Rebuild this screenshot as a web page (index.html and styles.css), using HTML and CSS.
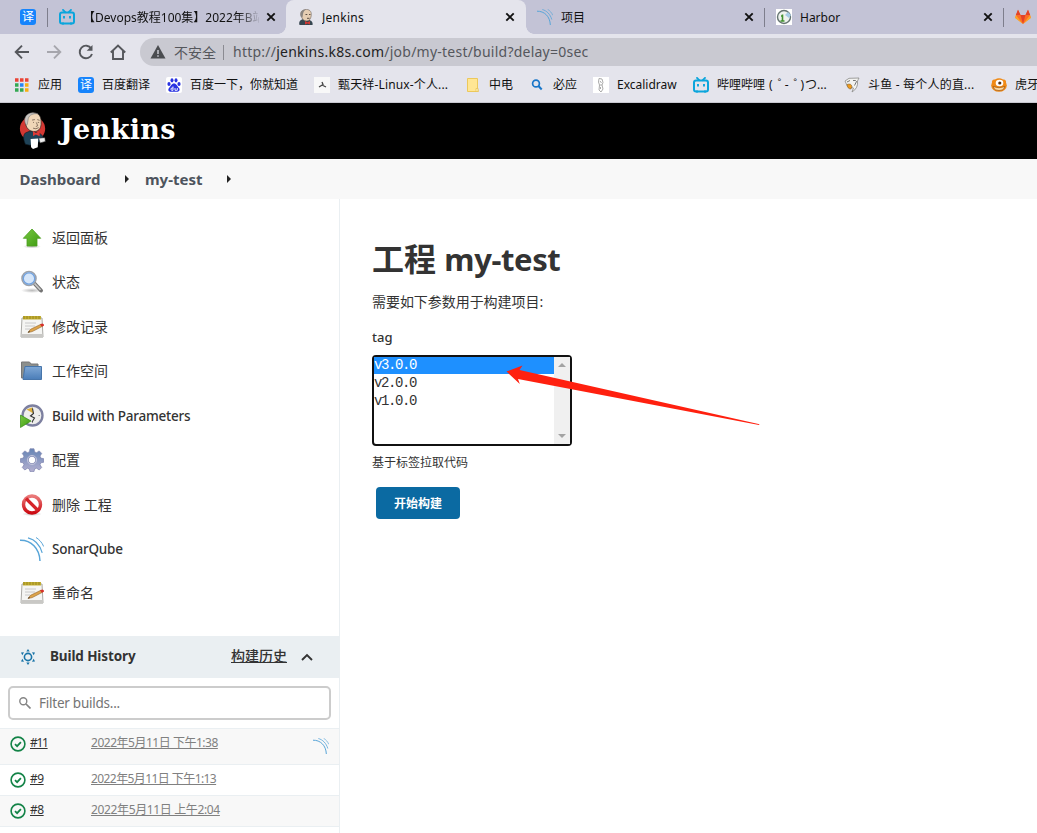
FILE: index.html
```html
<!DOCTYPE html>
<html lang="zh-CN">
<head>
<meta charset="utf-8">
<title>Jenkins</title>
<link rel="stylesheet" href="styles.css">
</head>
<body>
<svg class="sprite" width="0" height="0" aria-hidden="true">
  <defs>
    <linearGradient id="green" x1="0" y1="0" x2="1" y2="1"><stop offset="0" stop-color="#79c943"/><stop offset="1" stop-color="#3d9a10"/></linearGradient>
    <linearGradient id="blue" x1="0" y1="0" x2="0" y2="1"><stop offset="0" stop-color="#7fa8d6"/><stop offset="1" stop-color="#4a7db8"/></linearGradient>
    <linearGradient id="gear" x1="0" y1="0" x2="0" y2="1"><stop offset="0" stop-color="#6685b5"/><stop offset="1" stop-color="#b3afd0"/></linearGradient>
    <linearGradient id="red" x1="0" y1="0" x2="0" y2="1"><stop offset="0" stop-color="#ea7a7a"/><stop offset="1" stop-color="#cc0a12"/></linearGradient>
    <radialGradient id="shade"><stop offset="0" stop-color="#777" stop-opacity=".5"/><stop offset="1" stop-color="#777" stop-opacity="0"/></radialGradient>
  </defs>
  <symbol id="close" viewBox="0 0 10 10"><path d="M1.3 1.3l7.4 7.4M8.7 1.3L1.3 8.7" stroke="#111" stroke-width="1.9"/></symbol>
  <symbol id="bili" viewBox="0 0 16 16"><path d="M4 .9l2.2 2.3M12 .9L9.800 3.200" stroke="#0ba5dc" stroke-width="1.8" stroke-linecap="round"/><rect x="1" y="3.600" width="14" height="10.800" rx="2" fill="none" stroke="#0ba5dc" stroke-width="2"/><path d="M5 7v2.600M11 7v2.600" stroke="#0ba5dc" stroke-width="1.900"/><path d="M3 14.500h2M11 14.500h2" stroke="#0ba5dc" stroke-width="2"/></symbol>
  <symbol id="sonar" viewBox="0 0 24 24"><g fill="none" stroke="#58a5d8"><path d="M0 3.300C11 3 19.500 11 20 24" stroke-width="1.500"/><path d="M8 .8c6.500 1.600 12 7.200 14.200 15" stroke-width="1.200"/><path d="M16 .5c3.300 2 6 5 7.700 9" stroke-width="1"/></g></symbol>
  <symbol id="butler" viewBox="0 0 28 40">
    <ellipse cx="13.500" cy="17.500" rx="13.300" ry="13" fill="#d33833"/>
    <path d="M6 34c-2-5-3-9 0-12l5-2 9 2c4 2 5 4 5 7l-6 3-8 3z" fill="#1f4358" stroke="#0d1a22" stroke-width=".6"/>
    <path d="M6 10C6 3 10 .7 15 .7c6 .5 8 5 7.500 12.300-.4 5-3 7.500-7.500 7.500S6 17 6 10z" fill="#f0d6b7" stroke="#2b2522" stroke-width=".7"/>
    <path d="M7 14C3 8 6 1 14 .8l5 1c-5-.3-9 1.200-10 5.200l-1 6z" fill="#c9c5c1" stroke="#666" stroke-width=".5"/>
    <path d="M13 8.500l3-.5M18.500 8l2.500.8M14 11h1M19 11h1.500M17.500 11l1.500 3.500-2 .8M14 17q3 1.500 6-.5" fill="none" stroke="#6b5748" stroke-width=".8"/>
    <path d="M14 20l3 2 4-2v5.500l-4-1.700-3 1.700z" fill="#e03a36"/>
    <path d="M11.500 28.500l8-.5-.5 9-5 2-2-2z" fill="#fff"/><path d="M20 27.500l6.500-.5.5 4-5.500 1.500z" fill="#eee" stroke="#333" stroke-width=".6"/>
  </symbol>
  <symbol id="butler-head" viewBox="0 0 16 16">
    <path d="M1.500 16c-1-3 .5-5 3.500-6l5 .5c4 1 5 3 4.500 5.500z" fill="#364650"/>
    <path d="M3 5C3 1.500 6 .4 8.500.4c4 .2 5.300 3 4.700 6.500-.4 3.500-2.200 5-4.500 5C5.500 12 3 9 3 5z" fill="#e5cdb2" stroke="#5b5149" stroke-width=".5"/>
    <path d="M3 8C1 3 3.500.2 8.500.4 6 1 5.500 3 5 5l-.5 3.500z" fill="#8b8580"/>
    <path d="M7.500 5.500h1.800M11 5.500h1.500M9 9.300h2.500" stroke="#4d4139" stroke-width=".9"/>
    <path d="M7 12l2.500 1.200L12 12v3.500l-2.500-1L7 15.500z" fill="#d33833"/>
  </symbol>
  <symbol id="notepad" viewBox="0 0 24 24">
    <path d="M2 3h20l1 19H1z" fill="#f5f5f3" stroke="#aaa9a5"/><path d="M1 19h22v3.500H1z" fill="#c9c8c5"/>
    <path d="M3 1h18v3.500H3z" fill="#c2ae32"/><path d="M4 1v3M7 1v3M10 1v3M13 1v3M16 1v3M19 1v3" stroke="#8f7f1b" stroke-width=".8"/>
    <path d="M5 8h11M5 11h10M5 14h5" stroke="#c8c8c8"/>
    <path d="M8 17.500l2.500-3.200L21 9.200l1.400 2.100-10.200 5.300z" fill="#dda44a" stroke="#936125" stroke-width=".6"/><path d="M20 9.500l2-1.100q2.600.4 1.800 2.300l-1.900 1z" fill="#d6302a"/><path d="M8 17.500l1-1.500.9 1z" fill="#222"/>
  </symbol>
  <symbol id="ok" viewBox="0 0 16 16"><circle cx="8" cy="8" r="6.900" fill="none" stroke="#138347" stroke-width="1.600"/><path d="M5 8.200l2.100 2 3.800-4" fill="none" stroke="#138347" stroke-width="1.800"/></symbol>
</svg>

<header class="browser">
  <div class="tabs">
    <div class="tab tab-pinned"><span class="fanyi">译</span></div>
    <div class="tab tab-bili"><svg class="fav"><use href="#bili"/></svg><span class="tab-title fade">【Devops教程100集】2022年B站</span><svg class="x"><use href="#close"/></svg></div>
    <div class="tab tab-active"><svg class="fav"><use href="#butler-head"/></svg><span class="tab-title">Jenkins</span><svg class="x"><use href="#close"/></svg></div>
    <div class="tab tab-sonar"><svg class="fav"><use href="#sonar"/></svg><span class="tab-title">项目</span><svg class="x"><use href="#close"/></svg></div>
    <div class="tab tab-harbor"><svg class="fav" viewBox="0 0 16 16"><path fill="#fff" d="M0 0h16v16H0z"/><circle cx="8" cy="8" r="6.500" fill="#eef2ee" stroke="#657471" stroke-width="1.400"/><path d="M6.500 5.500v6.500M5 7h2M4.500 12h4" stroke="#43912f" stroke-width="1.600"/><path d="M9 6l3-3 3 3-2 3z" fill="#a6cce5"/></svg><span class="tab-title">Harbor</span><svg class="x"><use href="#close"/></svg></div>
    <div class="tab tab-gitlab"><svg class="fav" viewBox="0 0 16 16"><path d="M3 .8L.3 8.500 8 15 15.700 8.500 13 .8 10.500 6h-5z" fill="#fc6d26"/><path d="M3 .8L.8 6h4.700zM13 .8L15.200 6h-4.700zM5.500 6L8 15l2.500-9z" fill="#e24329"/><path d="M.8 6L0 9l8 6zM15.200 6l.8 3-8 6z" fill="#fca326"/></svg></div>
  </div>
  <div class="toolbar">
    <svg class="nav" viewBox="0 0 16 16"><path d="M15 8H2M8 1.700L1.700 8 8 14.300"/></svg>
    <svg class="nav dim" viewBox="0 0 16 16"><path d="M1 8h13M8 1.700L14.300 8 8 14.300"/></svg>
    <svg class="nav" viewBox="0 0 16 16"><path d="M13.300 4.500A6.300 6.300 0 1 0 14 10"/><path d="M14.500 1v5.800H8.700z" class="solid"/></svg>
    <svg class="nav" viewBox="0 0 16 16"><path d="M.8 8.500L8 1.500l7.200 7M3 7v8h10V7"/></svg>
    <div class="omnibox"><svg class="warn" viewBox="0 0 16 14"><path d="M8 0l7.500 13.500H.5z" fill="#4a4c50"/><path d="M8 5v4M8 10.200v1.600" stroke="#c9c9d1" stroke-width="1.500"/></svg><span class="insecure">不安全</span><span class="url">http://<b>jenkins.k8s.com</b>/job/my-test/build?delay=0sec</span></div>
  </div>
  <div class="bookmarks">
    <span class="bm bm-apps"><svg viewBox="0 0 14 14"><path d="M0 2h3.500M5 2h3.500M10 2h3.500" stroke="#ea4335" stroke-width="3.500"/><path d="M0 7h3.500" stroke="#34a853" stroke-width="3.500"/><path d="M5 7h3.500" stroke="#2886f4" stroke-width="3.500"/><path d="M10 7h3.500M10 12h3.500" stroke="#f7ae12" stroke-width="3.500"/><path d="M0 12h3.500M5 12h3.500" stroke="#34a853" stroke-width="3.500"/></svg>应用</span>
    <span class="bm bm-fanyi"><span class="fanyi">译</span>百度翻译</span>
    <span class="bm bm-baidu"><svg viewBox="0 0 16 16"><rect width="16" height="16" rx="2" fill="#fff"/><g fill="#2932e1"><ellipse cx="3" cy="7" rx="1.600" ry="2"/><ellipse cx="6" cy="3.300" rx="1.500" ry="2.100"/><ellipse cx="10" cy="3.300" rx="1.500" ry="2.100"/><ellipse cx="13" cy="7" rx="1.600" ry="2"/><path d="M8 6.500c2.500 0 3 2.500 5 4.500 1.500 2 0 3.800-2 3.800H5c-2.300 0-3.500-1.800-2-3.800C5 9 5.500 6.500 8 6.500z"/></g><path d="M7 9.500v3.800H5.500q-1.200-1.200 0-2.300H7M9 11v2.300h2.300V11" stroke="#fff" stroke-width=".9" fill="none"/></svg>百度一下，你就知道</span>
    <span class="bm bm-blog"><svg viewBox="0 0 16 16"><path fill="#f8f8f8" d="M0 0h16v16H0z"/><path d="M8 5l1 2.500L5 10M8 8l4 2" stroke="#444" stroke-width="1.300" fill="none"/></svg>甄天祥-Linux-个人...</span>
    <span class="bm bm-folder"><svg viewBox="0 0 16 16"><path d="M2.500 1.500h10V11l.8 3.500H2.500z" fill="#ffe694" stroke="#ecc85b"/><path d="M11 14.500v-3h2v3z" fill="#fff1b8" stroke="#e6c254" stroke-width=".7"/></svg>中电</span>
    <span class="bm bm-bing"><svg viewBox="0 0 16 16"><circle cx="7" cy="6.500" r="3.400" fill="none" stroke="#1976c9" stroke-width="1.700"/><path d="M9.500 9l3.200 3.500" stroke="#1976c9" stroke-width="2"/></svg>必应</span>
    <span class="bm bm-excali"><svg viewBox="0 0 16 16"><path fill="#fff" d="M0 0h16v16H0z"/><path d="M6 1.500l3 .5 1 3.500-1 2.500 1 4-2 3-2-2 .5-5L5.500 5zM7 8h2M7 4l1.500 2M7.500 10v2" fill="none" stroke="#aaa"/></svg>Excalidraw</span>
    <span class="bm bm-bili"><svg><use href="#bili"/></svg>哔哩哔哩<span class="face">(<i>゜</i>-<i>゜</i>)</span>つ...</span>
    <span class="bm bm-douyu"><svg viewBox="0 0 16 16"><path d="M1 4Q5 0 9 1.200L15 1q-1 2-1.500 3 1 7-5.500 11l1.500-4-6-1.500z" fill="#f2f2f0" stroke="#8a8a88" stroke-width=".8"/><path d="M9 3.500q3-.5 3.500 1l-2 4M3 5l3-1.500" fill="none" stroke="#555" stroke-width=".8"/><path d="M3 7.500q4-1.500 5 2l-1 2.500q-3.500 0-4-4.500z" fill="#ef9a1c" stroke="#7d6133" stroke-width=".6"/></svg>斗鱼 - 每个人的直...</span>
    <span class="bm bm-huya"><svg viewBox="0 0 16 16"><ellipse cx="8" cy="8.500" rx="7.800" ry="6.300" fill="#f08a16"/><path d="M1 6q-.5-4 3-3.500 4-2.500 8 0 3.500-.5 3 3.500z" fill="#f08a16"/><ellipse cx="8.500" cy="6" rx="3.800" ry="3.200" fill="#fff"/><circle cx="8.800" cy="6" r="1.600" fill="#533116"/><path d="M2 9.500q6 2.500 12 0l-2 3.300q-4 1.500-8 0z" fill="#fbd9a0" stroke="#8d4c10" stroke-width=".6"/></svg>虎牙</span>
  </div>
</header>

<div class="masthead"><svg class="butler"><use href="#butler"/></svg><span class="wordmark">Jenkins</span></div>
<nav class="crumbs"><a>Dashboard</a><i class="arrow"></i><a>my-test</a><i class="arrow"></i></nav>

<div class="page">
  <aside class="side">
    <ul class="tasks">
      <li><svg viewBox="0 0 24 24"><ellipse cx="12" cy="20.500" rx="9" ry="2" fill="url(#shade)"/><path d="M12 3l8.700 9.300H17V20H7v-7.700H3.300z" fill="url(#green)" stroke="#4ba01f" stroke-width=".8"/></svg>返回面板</li>
      <li><svg viewBox="0 0 24 24"><ellipse cx="12" cy="20.500" rx="11" ry="2.500" fill="url(#shade)"/><path d="M14 13l7 7.500" stroke="#747474" stroke-width="4" stroke-linecap="round"/><path d="M14.500 13.500l6 6.500" stroke="#c7c7c7" stroke-width="1.800"/><circle cx="9" cy="8.500" r="7" fill="#b9d7f8" stroke="#9da2aa" stroke-width="1.600"/><circle cx="9" cy="8.500" r="5.700" fill="#d5e6fa" stroke="#72a2df" stroke-width="1.300"/></svg>状态</li>
      <li><svg><use href="#notepad"/></svg>修改记录</li>
      <li><svg viewBox="0 0 24 24"><path d="M1.500 3h8l1.500 2h7v14H1.500z" fill="#8c8f8c" stroke="#777"/><path d="M5 7.500h16.500V20.500H3z" fill="url(#blue)" stroke="#4775aa"/></svg>工作空间</li>
      <li><svg viewBox="0 0 24 24"><circle cx="12.500" cy="11.500" r="10" fill="#eeeeec" stroke="#7d80a0" stroke-width="2.300"/><path d="M12.500 3.500v2M20 11.500h-1.500M12.500 19v-1.500" stroke="#999"/><path d="M6.500 5.500l5.500-2 1.500 6z" fill="#dcae3b"/><path d="M12.500 4.500l1 5-3 2.500 4 2-2.500 4" fill="none" stroke="#333" stroke-width="1.100"/><path d="M.5 11L11 17 .5 23.500z" fill="url(#green)" stroke="#348b11" stroke-width=".7"/></svg><b class="params">Build with Parameters</b></li>
      <li><svg viewBox="0 0 24 24"><path fill-rule="evenodd" d="M10 .8h4l.6 3.100 2 .8 2.600-1.800 2.500 2.500-1.700 2.700.8 2 3 .6v3.500l-3 .6-.8 2 1.700 2.700-2.500 2.500-2.600-1.800-2 .8-.6 2.600h-4l-.6-2.600-2-.8L4.800 22l-2.500-2.500L4 16.800l-.8-2L.3 14.200v-3.500l2.900-.6.8-2-1.700-2.700 2.500-2.500 2.600 1.800 2-.8zM12 8.300a3.700 3.700 0 1 0 .01 0z" fill="url(#gear)" stroke="#7d83ad" stroke-width=".7"/><circle cx="12" cy="12" r="4.600" fill="none" stroke="#c4c6dc" stroke-width=".9"/></svg>配置</li>
      <li><svg viewBox="0 0 24 24"><ellipse cx="12" cy="21" rx="10" ry="2" fill="url(#shade)"/><circle cx="12" cy="11.500" r="8.500" fill="#fff" stroke="url(#red)" stroke-width="3.400"/><path d="M6 5.500l12 12" stroke="#d6242a" stroke-width="3.200"/></svg>删除 工程</li>
      <li><svg><use href="#sonar"/></svg><b class="params">SonarQube</b></li>
      <li><svg><use href="#notepad"/></svg>重命名</li>
    </ul>
    <section class="history">
      <div class="history-head"><svg class="sun" viewBox="0 0 16 16"><circle cx="8" cy="8" r="3.600" fill="none" stroke="#1874a8" stroke-width="1.600"/><path d="M8 0L9.700 2.600H6.300zM8 16l1.700-2.600H6.300zM1 3.500l3-.2-1.700 3zM15 3.500l-3-.2 1.700 3zM1 12.500l3 .2-1.700-3zM15 12.500l-3 .2 1.700-3z" fill="#1874a8"/></svg><b>Build History</b><a class="trend">构建历史</a><svg class="chev" viewBox="0 0 12 8"><path d="M1 7l5-5 5 5" fill="none" stroke="#333" stroke-width="1.900"/></svg></div>
      <div class="filter"><svg viewBox="0 0 12 12"><circle cx="4.300" cy="4.300" r="3.500" fill="none" stroke="#858585" stroke-width="1.400"/><path d="M7 7l4.500 4.500" stroke="#858585" stroke-width="1.700"/></svg><span>Filter builds...</span></div>
      <div class="build first"><svg class="ok"><use href="#ok"/></svg><a class="num eleven">#11</a><a class="date">2022年5月11日 下午1:38</a><svg class="mini"><use href="#sonar"/></svg></div>
      <div class="build"><svg class="ok"><use href="#ok"/></svg><a class="num">#9</a><a class="date narrow">2022年5月11日 下午1:13</a></div>
      <div class="build odd"><svg class="ok"><use href="#ok"/></svg><a class="num">#8</a><a class="date wide">2022年5月11日 上午2:04</a></div>
    </section>
  </aside>
  <main class="main">
    <h1>工程 <span>my-test</span></h1>
    <p class="intro">需要如下参数用于构建项目:</p>
    <div class="label">tag</div>
    <div class="listbox">
      <div class="options"><div class="opt selected">v3.0.0</div><div class="opt">v2.0.0</div><div class="opt">v1.0.0</div></div>
      <div class="scroll"><i class="up"></i><i class="down"></i></div>
      <svg class="pointer" viewBox="0 0 256 64"><path d="M1.500 10.500L17.500 4.500 14.500 9 254.500 63.200 254 64 13 18l1.800 5z" fill="#ff200f"/></svg>
    </div>
    <p class="desc">基于标签拉取代码</p>
    <span class="submit">开始构建</span>
  </main>
</div>
</body>
</html>
```
FILE: styles.css
```css
* { box-sizing: border-box; }
body { margin: 0; width: 1037px; height: 833px; overflow: hidden; background: #fff; color: #333; font: 14px/20px "Noto Sans", "Noto Sans CJK SC", sans-serif; }
svg { display: block; flex: none; }
.sprite { position: absolute; }

.browser { height: 103px; background: #e4e4ec; border-bottom: 1px solid #c8c8d0; color: #111; font-size: 12px; }
.tabs { display: flex; height: 34px; background: #c3c3d6; }
.tab { display: flex; align-items: center; position: relative; white-space: nowrap; }
.tab-pinned { width: 48px; padding-left: 20px; }
.tab-pinned::after, .tab-harbor::before, .tab-gitlab::before { content: ""; position: absolute; top: 8px; width: 1px; height: 19px; background: #7e7e8c; }
.tab-pinned::after { right: 0; }
.tab-harbor::before, .tab-gitlab::before { left: 0; }
.tab-bili { width: 238px; padding: 0 10px 0 11px; }
.tab-active { width: 240px; padding: 0 11px 0 12px; background: #e4e4ec; border-radius: 8px 8px 0 0; }
.tab-active::before, .tab-active::after { content: ""; position: absolute; bottom: 0; width: 8px; height: 8px; }
.tab-active::before { left: -8px; background: radial-gradient(circle at 0 0, #c3c3d6 7.5px, #e4e4ec 8px); }
.tab-active::after { right: -8px; background: radial-gradient(circle at 100% 0, #c3c3d6 7.5px, #e4e4ec 8px); }
.tab-sonar { width: 238px; padding: 0 10px 0 11px; }
.tab-harbor { width: 239px; padding: 0 10px 0 12px; }
.tab-gitlab { padding-left: 12px; }
.tab-active .tab-title { letter-spacing: .27px; }
.fav { width: 16px; height: 16px; }
.tab-title { flex: 1; min-width: 0; margin-left: 8px; padding-top: 2px; overflow: hidden; }
.fade { margin-right: 7px; -webkit-mask-image: linear-gradient(90deg, #000 155px, transparent 178px); mask-image: linear-gradient(90deg, #000 155px, transparent 178px); }
.x { width: 10px; height: 10px; }
.fanyi { display: grid; place-items: center; width: 16px; height: 16px; border-radius: 3px; background: #1684fc; color: #fff; font-size: 12px; line-height: 16px; }

.toolbar { display: flex; align-items: center; height: 35px; padding-left: 14px; }
.nav { width: 16px; height: 16px; margin-right: 16px; fill: none; stroke: #55575c; stroke-width: 1.9; }
.nav .solid { fill: #55575c; stroke: none; }
.dim { stroke: #a6a6ad; }
.omnibox { display: flex; align-items: center; flex: 1; height: 28px; margin-left: -2px; margin-top: 1px; padding-left: 10px; background: #c9c9d1; border-radius: 14px 0 0 14px; color: #55575c; font-size: 14px; }
.warn { width: 16px; height: 14px; }
.insecure { margin-left: 8px; padding-right: 7px; border-right: 1px solid #8b8b92; line-height: 15px; }
.url { margin-left: 9px; white-space: nowrap; letter-spacing: .235px; }
.url b { font-weight: 400; color: #222; }

.bookmarks { position: relative; display: flex; height: 32px; align-items: center; white-space: nowrap; }
.bm { display: flex; align-items: center; flex: none; }
.bm > svg, .bm > .fanyi { width: 16px; height: 16px; margin-right: 8px; }
.bm-apps { width: 63px; margin-left: 15px; }
.bm-apps > svg { width: 14px; height: 14px; margin-right: 9px; }
.bm-fanyi { width: 88px; }
.bm-baidu { width: 148px; }
.bm-blog { width: 151px; letter-spacing: .15px; }
.bm-folder { width: 64px; }
.bm-bing { width: 64px; }
.bm-excali { width: 100px; }
.bm-bili { width: 151px; }
.bm-douyu { width: 147px; letter-spacing: .2px; }
.face { margin: 0 1px 0 4px; }
.face i { display: inline-block; width: 12px; text-indent: 5px; font-style: normal; }

.masthead { display: flex; align-items: center; height: 56px; padding-left: 19px; background: #000; }
.butler { width: 28px; height: 38px; }
.wordmark { margin: -2px 0 0 13px; color: #fff; font: bold 27px/40px "DejaVu Serif", serif; letter-spacing: .35px; }
.crumbs { display: flex; align-items: center; height: 40px; padding-left: 19.5px; background: #f8f8f8; color: #4d545d; font-size: 15px; font-weight: 700; }
.arrow { border: 4px solid transparent; border-left-color: #222; border-right: 0; }
.crumbs .arrow { margin: 0 16px 0 24.5px; }

.page { display: flex; height: 634px; }
.side { width: 340px; border-right: 1px solid #eaeff2; }
.tasks { margin: 0; padding: 16.7px 0 20.3px; list-style: none; }
.tasks li { display: flex; align-items: center; height: 44.44px; padding-left: 20px; }
.tasks svg { width: 24px; height: 24px; margin-right: 8px; }
.tasks b { padding-top: 1px; font-weight: 500; font-size: 13.5px; }
.params { letter-spacing: -.22px; }
.history-head { display: flex; align-items: center; height: 42px; padding: 0 26px 1px 20px; background: #eaeff2; }
.sun { width: 16px; height: 16px; margin-top: 2px; }
.history-head b { margin-left: 14px; font-weight: 700; font-size: 13.5px; letter-spacing: -.12px; }
.trend { margin-left: auto; font-weight: 500; text-decoration: underline; }
.chev { width: 12px; height: 8px; margin: 2px 0 0 14px; }
.filter { display: flex; align-items: center; height: 34px; margin: 8px 8px 8px; padding-left: 9px; border: 2px solid #ccc; border-radius: 5px; color: #757575; font-size: 13.5px; letter-spacing: -.24px; }
.filter svg { width: 12px; height: 12px; margin-right: 8px; }
.build { display: flex; height: 31px; padding: 4px 0 0 10px; border-bottom: 1px solid #eaeff2; font-size: 12px; line-height: 20px; }
.first { height: 37px; border-top: 1px solid #eaeff2; background: #f8f8f8; }
.odd { background: #f8f8f8; }
.ok { width: 16px; height: 16px; margin: 3px 4px 0 0; }
.num { margin-right: auto; text-decoration: underline; letter-spacing: -.5px; }
.eleven { letter-spacing: -1.3px; }
.date { width: 222px; margin-right: 26px; color: #808080; text-decoration: underline; letter-spacing: -.5px; }
.narrow { letter-spacing: -.58px; }
.wide { letter-spacing: -.36px; }
.first .date { margin-right: 0; letter-spacing: -.48px; }
.mini { width: 16px; height: 16px; margin: 5px 10px 0 0; }

.main { width: 697px; padding: 36px 0 0 32px; }
h1 { margin: 0; font-size: 32px; line-height: 48px; font-weight: 700; }
h1 span { font-size: 31px; letter-spacing: -.4px; }
.intro { margin: 9px 0 0; letter-spacing: -.05px; }
.label { margin-top: 15px; font-size: 13px; font-weight: 500; }
.listbox { position: relative; display: flex; width: 200px; height: 91px; margin-top: 8px; border: 2px solid #111; border-radius: 4px; }
.options { flex: 1; color: #333; font: 14px/18px "Liberation Mono", monospace; letter-spacing: -1.4px; }
.opt { height: 18px; }
.selected { height: 17px; line-height: 16px; background: #1e90ff; color: #fff; }
.scroll { display: flex; flex-direction: column; justify-content: space-between; align-items: center; width: 16px; padding: 6px 0; background: #f0f0f0; }
.up, .down { border: 4px solid transparent; }
.up { border-top: 0; border-bottom-color: #a3a3a3; }
.down { border-bottom: 0; border-top-color: #a3a3a3; }
.pointer { position: absolute; left: 131px; top: 4px; width: 256px; height: 64px; }
.desc { margin: 7px 0 0; font-size: 12px; }
.submit { display: grid; place-items: center; width: 84px; height: 32px; margin: 14px 0 0 4px; padding-top: 1px; border-radius: 4px; background: #0b6aa2; color: #fff; font-size: 12px; font-weight: 700; }
```
